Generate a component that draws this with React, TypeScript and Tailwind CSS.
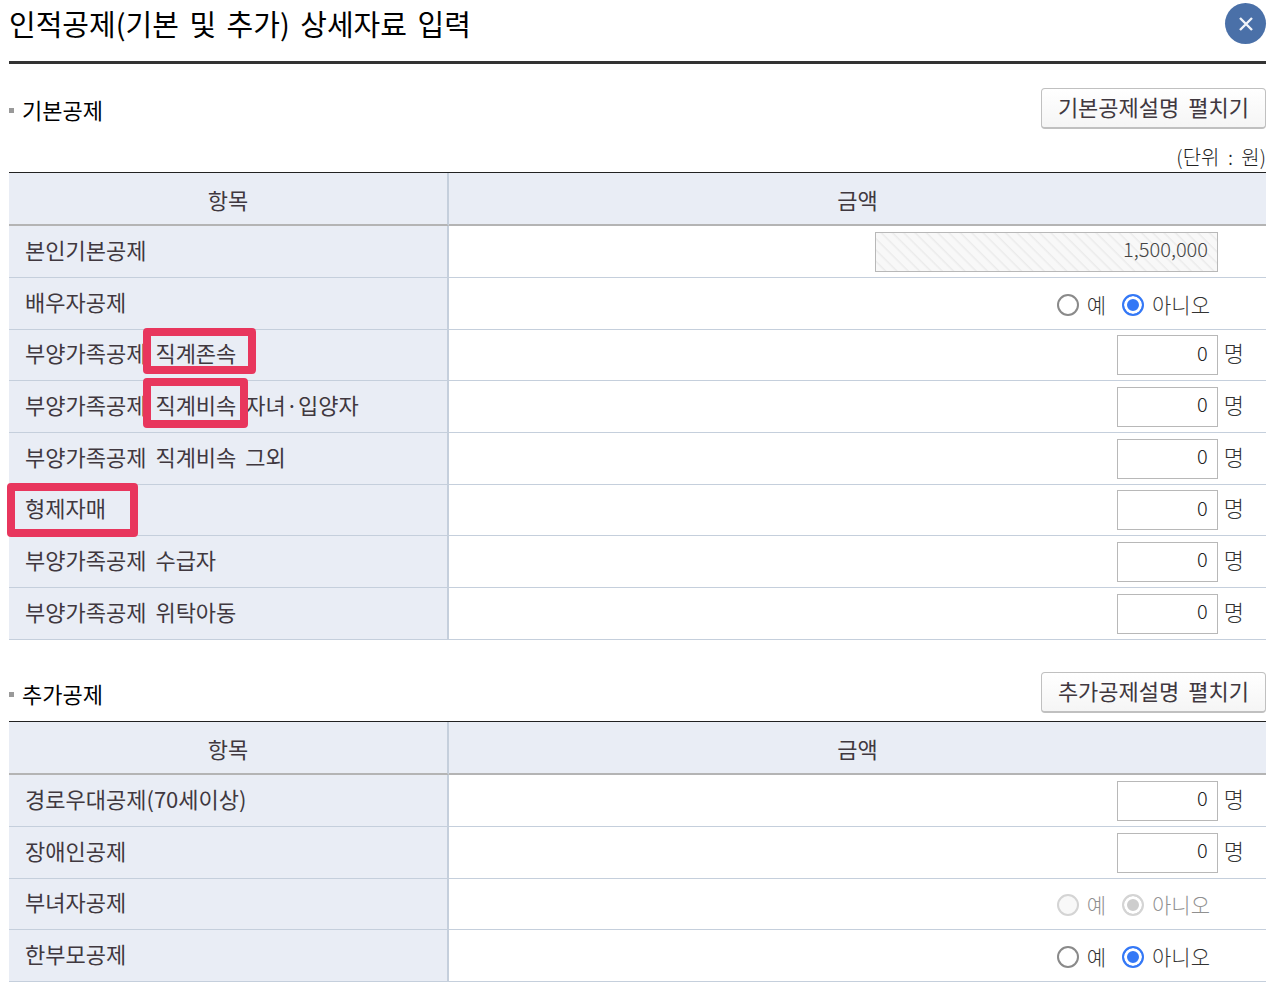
import { useState } from 'react';

type Field =
  | { kind: 'amount'; value: string }
  | { kind: 'count' }
  | { kind: 'choice'; disabled?: boolean };

interface RowData {
  id: string;
  before?: string;
  marked?: string;
  after?: string;
  // how far the marker frame reaches past the marked words
  frame?: string;
  field: Field;
}

const basicRows: RowData[] = [
  { id: 'self', before: '본인기본공제', field: { kind: 'amount', value: '1,500,000' } },
  { id: 'spouse', before: '배우자공제', field: { kind: 'choice' } },
  {
    id: 'ascendant',
    before: '부양가족공제',
    marked: '직계존속',
    frame: '-top-2 -bottom-1.5 -left-3 -right-5',
    field: { kind: 'count' },
  },
  {
    id: 'child',
    before: '부양가족공제',
    marked: '직계비속',
    after: '자녀·입양자',
    frame: '-top-2.5 -bottom-2 -left-3 -right-3',
    field: { kind: 'count' },
  },
  { id: 'descendant', before: '부양가족공제 직계비속 그외', field: { kind: 'count' } },
  {
    id: 'sibling',
    marked: '형제자매',
    frame: '-top-2 -bottom-3.5 -left-4.5 -right-8',
    field: { kind: 'count' },
  },
  { id: 'recipient', before: '부양가족공제 수급자', field: { kind: 'count' } },
  { id: 'foster', before: '부양가족공제 위탁아동', field: { kind: 'count' } },
];

const extraRows: RowData[] = [
  { id: 'senior', before: '경로우대공제(70세이상)', field: { kind: 'count' } },
  { id: 'disabled', before: '장애인공제', field: { kind: 'count' } },
  { id: 'woman', before: '부녀자공제', field: { kind: 'choice', disabled: true } },
  { id: 'single-parent', before: '한부모공제', field: { kind: 'choice' } },
];

// Korean text with a wider gap between words
const Words = ({ text }: { text: string }) => (
  <>
    {text.split(' ').map((word, i) => (
      <span key={i} className={i > 0 ? 'ml-1' : ''}>
        {i > 0 && ' '}
        {word}
      </span>
    ))}
  </>
);

const Choice = ({ id, disabled }: { id: string; disabled?: boolean }) => {
  const [value, setValue] = useState('no');
  const options = [
    { key: 'yes', label: '예' },
    { key: 'no', label: '아니오' },
  ];

  return (
    <div className="flex justify-end gap-4 pt-0.5 pr-14">
      {options.map(({ key, label }) => (
        <label
          key={key}
          className={`flex items-center gap-2 text-[21px] leading-8 font-light ${disabled ? 'text-[#909090]' : 'text-[#333]'}`}
        >
          <input
            type="radio"
            name={id}
            value={key}
            disabled={disabled}
            checked={value === key}
            onChange={() => setValue(key)}
            className="size-[22px] appearance-none rounded-full border-2 border-[#8a8a8a] bg-white checked:border-[#3478f6] checked:bg-[#3478f6] checked:shadow-[inset_0_0_0_3px_#fff] disabled:border-[#d4d4d4] disabled:bg-[#f8f8f8] disabled:checked:border-[#d4d4d4] disabled:checked:bg-[#cdcdcd]"
          />
          <span className="pb-0.5">{label}</span>
        </label>
      ))}
    </div>
  );
};

const FieldCell = ({ id, field }: { id: string; field: Field }) => {
  if (field.kind === 'choice') {
    return <Choice id={id} disabled={field.disabled} />;
  }

  if (field.kind === 'amount') {
    return (
      <div className="flex justify-end pr-12">
        <input
          id={id}
          readOnly
          defaultValue={field.value}
          className="h-10 w-[343px] border border-[#b8b8b8] bg-[repeating-linear-gradient(45deg,#f8f8f8_0px,#f8f8f8_5px,#ebebeb_7px,#f8f8f8_8px)] px-[9px] pb-1.5 text-right text-xl font-light text-[#444]"
        />
      </div>
    );
  }

  return (
    <div className="flex items-center justify-end gap-1.5 pr-[22px]">
      <input
        id={id}
        defaultValue="0"
        className="h-10 w-[101px] border border-[#b8b8b8] bg-white px-[9px] pb-1.5 text-right text-xl font-light text-[#222]"
      />
      <span className="pb-1.5 font-light text-[#333]">명</span>
    </div>
  );
};

const DeductionTable = ({ rows }: { rows: RowData[] }) => (
  <table className="w-full table-fixed border-separate border-spacing-0 border-t border-[#222] text-[22px] leading-8 text-[#40383f]">
    <thead>
      <tr className="h-[53px] bg-[#e9edf5]">
        <th className="w-[35%] border-r-2 border-b-2 border-r-[#c5cfdc] border-b-[#b4b4b4] font-normal">항목</th>
        <th className="border-b-2 border-[#b4b4b4] font-normal">금액</th>
      </tr>
    </thead>
    <tbody>
      {rows.map(({ id, before, marked, after, frame, field }) => (
        <tr key={id} className="h-[52px] nth-[3n]:h-[51px]">
          <th
            scope="row"
            className="border-r-2 border-b border-[#c5cfdc] bg-[#e9edf5] pb-1.5 pl-4 text-left font-normal"
          >
            <label htmlFor={id}>
              {before && <Words text={before} />}
              {before && marked && ' '}
              {marked && (
                <span className={`relative inline-block ${before ? 'ml-1' : ''}`}>
                  {marked}
                  <span className={`absolute rounded-sm border-8 border-[#e8365d] ${frame}`} />
                </span>
              )}
              {after && ' '}
              {after && <span className="ml-1">{after}</span>}
            </label>
          </th>
          <td className="border-b border-[#c5cfdc] p-0">
            <FieldCell id={id} field={field} />
          </td>
        </tr>
      ))}
    </tbody>
  </table>
);

const SectionHeader = ({ title }: { title: string }) => (
  <div className="flex items-center justify-between">
    <h2 className="flex items-center gap-2 pt-1 text-[22px] leading-8 text-black">
      <span className="size-[5px] bg-[#999]" />
      <span className="pb-1">{title}</span>
    </h2>
    <button
      type="button"
      className="h-[41px] rounded-sm border border-b-2 border-[#c0c0c0] bg-linear-to-b from-white to-[#f5f5f5] px-4 pb-1 text-[22px] leading-8 text-[#40383f]"
    >
      <Words text={`${title}설명 펼치기`} />
    </button>
  </div>
);

export default function App() {
  return (
    <main className="bg-white pr-[18px] pb-3 pl-[9px] font-['Noto_Sans_CJK_KR',sans-serif]">
      <header className="flex h-16 items-start justify-between border-b-[3px] border-[#333] pt-[3px]">
        <h1 className="text-[29px] leading-10 text-black">
          <Words text="인적공제(기본 및 추가) 상세자료 입력" />
        </h1>
        <button
          type="button"
          aria-label="닫기"
          className="flex size-[41px] items-center justify-center rounded-full bg-[#4a70a8]"
        >
          <svg viewBox="0 0 14 14" className="size-[14px]" fill="none" stroke="#f1f4f9" strokeWidth="2.4">
            <path d="M1 1L13 13M13 1L1 13" />
          </svg>
        </button>
      </header>

      <section className="pt-6">
        <SectionHeader title="기본공제" />
        <p className="pt-3 text-right text-xl leading-[31px] font-light text-[#222]">
          <Words text="(단위 : 원)" />
        </p>
        <DeductionTable rows={basicRows} />
      </section>

      <section className="pt-8">
        <SectionHeader title="추가공제" />
        <div className="pt-2">
          <DeductionTable rows={extraRows} />
        </div>
      </section>
    </main>
  );
}
